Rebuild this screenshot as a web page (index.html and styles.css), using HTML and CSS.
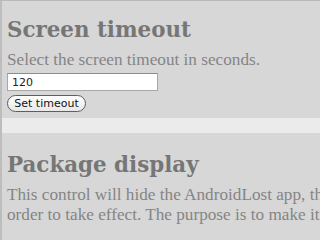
FILE: index.html
```html
<!DOCTYPE html>
<html>
<head>
<meta charset="utf-8">
<link rel="stylesheet" href="styles.css">
</head>
<body>
<div class="page">
  <section class="panel first">
    <h1 class="title">Screen timeout</h1>
    <p class="desc">Select the screen timeout in seconds.</p>
    <input class="field" type="text" value="120">
    <div class="actions"><button class="btn" type="button">Set timeout</button></div>
  </section>
  <div class="band"></div>
  <section class="panel second">
    <h1 class="title">Package display</h1>
    <p class="desc">This control will hide the AndroidLost app, the phone must restart in<br>order to take effect. The purpose is to make it harder to find.</p>
  </section>
</div>
</body>
</html>
```

FILE: styles.css
```css
html, body {
  margin: 0;
  padding: 0;
  background: #d7d7d7;
  overflow: hidden;
}
.page {
  height: 100vh;
  overflow: hidden;
  border-top: 1px solid #b9b9b9;
  border-left: 2px solid #bdbdbd;
  box-sizing: border-box;
  background: #d7d7d7;
}
.panel {
  padding-left: 5px;
  background: #d7d7d7;
}
.first {
  padding-top: 16px;
  padding-bottom: 6px;
}
.second {
  padding-top: 19px;
}
.band {
  height: 15px;
  background: #ebebeb;
}
.title {
  margin: 0;
  font-family: "DejaVu Serif", Georgia, serif;
  font-weight: bold;
  font-size: 21.4px;
  line-height: 26px;
  color: #767676;
  white-space: nowrap;
}
.desc {
  margin: 7px 0 0 0;
  font-family: "Liberation Serif", Georgia, serif;
  font-size: 17.2px;
  line-height: 20px;
  color: #858585;
  white-space: nowrap;
}
.field {
  display: block;
  margin: 3px 0 0 0;
  width: 151px;
  height: 18px;
  box-sizing: border-box;
  border: 1px solid #a8a8a8;
  border-top-color: #8d8d8d;
  background: #fff;
  padding: 0 4px;
  font-family: "DejaVu Sans", sans-serif;
  font-size: 11px;
  color: #222;
}
.actions {
  margin-top: 4px;
  display: flex;
}
.btn {
  height: 17px;
  width: 79px;
  padding: 0;
  box-sizing: border-box;
  border: 1px solid #5e5e5e;
  border-radius: 9px;
  background: linear-gradient(#ffffff, #e8e8e8);
  font-family: "DejaVu Sans", sans-serif;
  font-size: 11px;
  line-height: 15px;
  color: #111;
}
```
